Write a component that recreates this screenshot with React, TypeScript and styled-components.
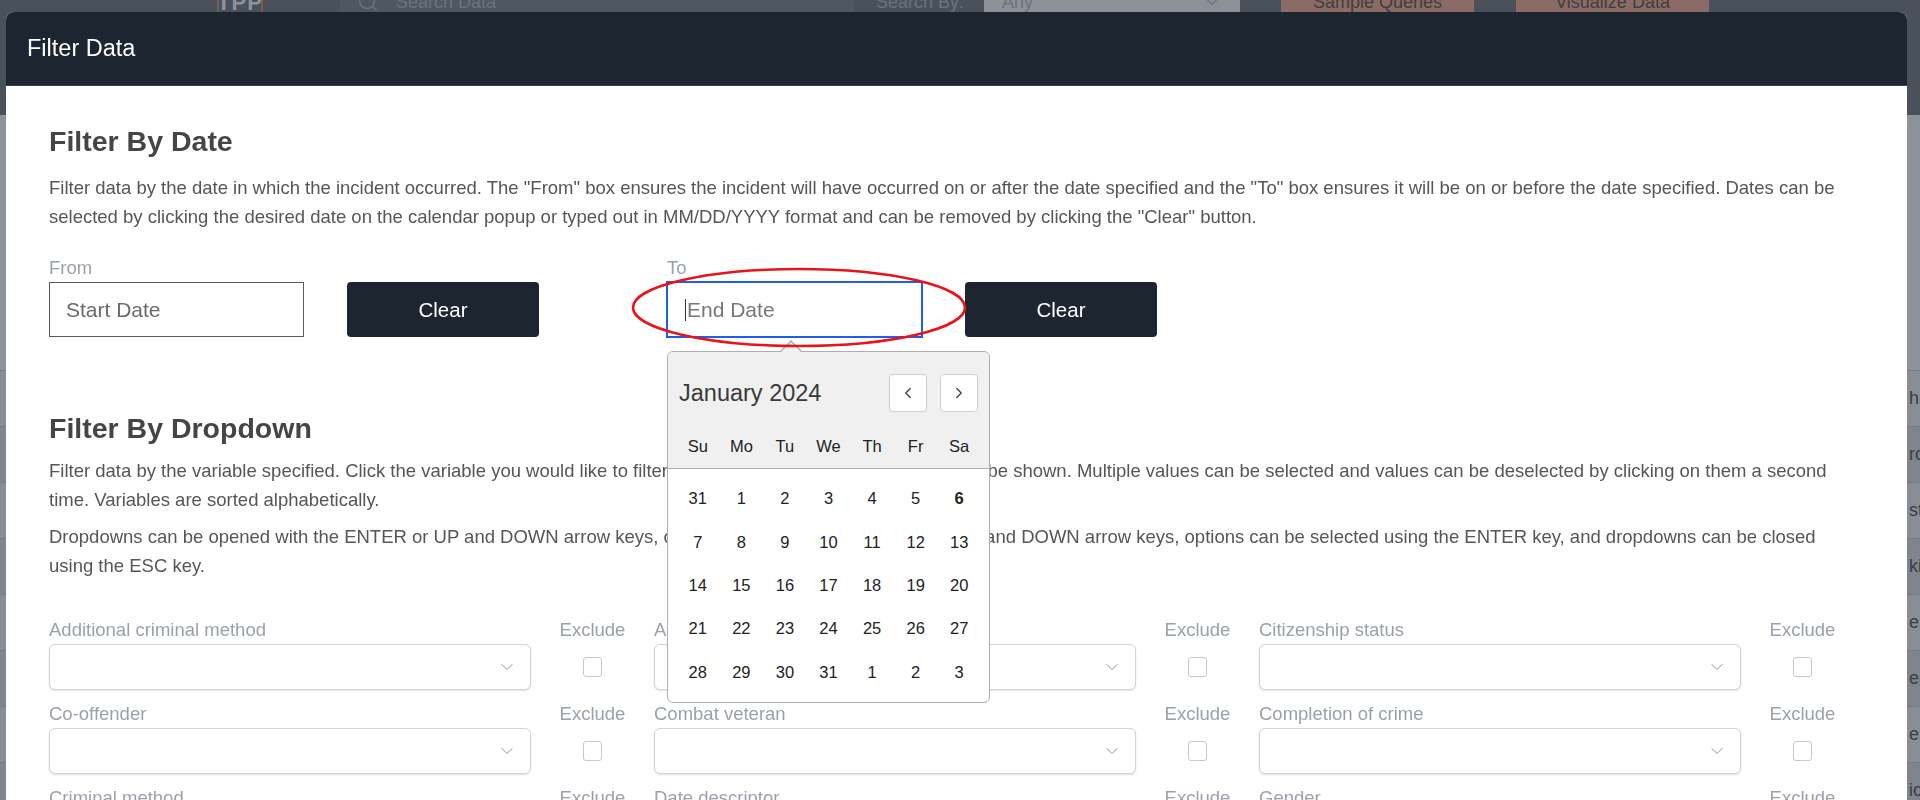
import React from 'react';
import styled, { createGlobalStyle, css } from 'styled-components';
import { ChevronDown, ChevronLeft, ChevronRight, Search } from 'lucide-react';

const GlobalStyle = createGlobalStyle`
  html, body {
    margin: 0;
    padding: 0;
    width: 1920px;
    height: 800px;
    overflow: hidden;
    background: #878c94;
    font-family: "Liberation Sans", Arial, Helvetica, sans-serif;
  }
  * { box-sizing: border-box; }
`;

/* ---------- underlying (dimmed) page ---------- */
const Page = styled.div`
  position: relative;
  width: 1920px;
  height: 800px;
  overflow: hidden;
  background: #878c94;
`;

const NavBar = styled.header`
  height: 115px;
  background: #4b515b;
  display: flex;
  align-items: flex-start;
  padding-left: 217px;
  overflow: hidden;
`;

const Logo = styled.div`
  margin-top: -28px;
  width: 46px;
  height: 42px;
  border-left: 2px solid #7d5a50;
  border-right: 2px solid #7d5a50;
  color: #8e939b;
  font-weight: 700;
  font-size: 22px;
  line-height: 22px;
  display: flex;
  align-items: flex-end;
  justify-content: center;
  letter-spacing: 1px;
`;

const SearchBox = styled.div`
  margin-top: -18px;
  margin-left: 77px;
  width: 514px;
  height: 40px;
  background: #515762;
  display: flex;
  align-items: center;
  gap: 17px;
  padding-left: 17px;
  color: #6c727c;
  font-size: 18px;
`;

const NavText = styled.div<{ $ml: number }>`
  margin-top: -18px;
  margin-left: ${(p) => p.$ml}px;
  height: 40px;
  display: flex;
  align-items: center;
  color: #6c727c;
  font-size: 18px;
`;

const NavSelect = styled.div`
  margin-top: -18px;
  margin-left: 20px;
  width: 256px;
  height: 40px;
  background: #8c9198;
  display: flex;
  align-items: center;
  justify-content: space-between;
  padding: 0 18px 0 18px;
  color: #6c727c;
  font-size: 18px;
`;

const NavButton = styled.div<{ $ml: number }>`
  margin-top: -18px;
  margin-left: ${(p) => p.$ml}px;
  width: 193px;
  height: 40px;
  background: #8c6a66;
  display: flex;
  align-items: center;
  justify-content: center;
  color: #3f3f3f;
  font-size: 18px;
`;

const Band = styled.div`
  height: 255px;
  background: #8e939b;
`;

const TableRow = styled.div<{ $alt: boolean }>`
  height: 56px;
  border-top: 1px solid #767b83;
  background: ${(p) => (p.$alt ? '#80858d' : '#898e96')};
  display: flex;
  align-items: center;
  padding-left: 1909px;
  color: #3b3e44;
  font-size: 18px;
  white-space: nowrap;
`;

/* ---------- modal ---------- */
const Modal = styled.div`
  position: fixed;
  top: 12px;
  left: 6px;
  width: 1901px;
  height: 800px;
  background: #ffffff;
  border-radius: 8px 8px 0 0;
  overflow: hidden;
`;

const ModalHeader = styled.div`
  height: 74px;
  background: #1c2530;
  display: flex;
  align-items: center;
  padding-left: 21px;
  border-bottom: 1px solid #3a434e;
`;

const ModalTitle = styled.h4`
  margin: 0;
  color: #ffffff;
  font-weight: 400;
  font-size: 23.5px;
  line-height: 1.2;
`;

const ModalBody = styled.div`
  padding: 38px 17px 0 43px;
`;

const SectionTitle = styled.h3<{ $mt?: number }>`
  margin: ${(p) => p.$mt ?? 0}px 0 0 0;
  color: #454545;
  font-weight: 700;
  font-size: 28.5px;
  line-height: 34px;
`;

const Text = styled.p<{ $mt?: number; $narrow?: boolean }>`
  margin: ${(p) => p.$mt ?? 0}px 0 0 0;
  color: #565656;
  font-size: 18.5px;
  line-height: 28.5px;
  max-width: ${(p) => (p.$narrow ? '1800px' : 'none')};
`;

const DateRow = styled.div`
  display: flex;
  gap: 128px;
  margin-top: 26px;
`;

const DateGroup = styled.div`
  display: flex;
  flex-direction: column;
  gap: 3px;
`;

const FieldLabel = styled.div`
  color: #9ba1ab;
  font-size: 18.5px;
  line-height: 22px;
  white-space: nowrap;
`;

const DateControls = styled.div`
  display: flex;
  gap: 43px;
  align-items: center;
`;

const InputWrap = styled.div`
  position: relative;
`;

const DateField = styled.div<{ $focused?: boolean }>`
  width: 255px;
  height: 55px;
  border: 1px solid #5c5c5c;
  display: flex;
  align-items: center;
  padding-left: 16px;
  color: #6a6a6a;
  font-size: 21px;
  ${(p) =>
    p.$focused &&
    css`
      border-color: #1f5ee8;
      outline: 1px solid #1f5ee8;
      padding-left: 17px;
      color: #777;
    `}
`;

const Caret = styled.span`
  display: inline-block;
  width: 1px;
  height: 22px;
  background: #333;
  margin-right: 1px;
`;

const ClearButton = styled.button`
  width: 192px;
  height: 55px;
  border: none;
  border-radius: 4px;
  background: #1c2530;
  color: #ffffff;
  font-family: inherit;
  font-size: 20.5px;
  cursor: pointer;
`;

const Annotation = styled.svg`
  position: absolute;
  left: -37px;
  top: -15px;
  width: 338px;
  height: 81px;
  overflow: visible;
  pointer-events: none;
  z-index: 3;
`;

/* calendar */
const Calendar = styled.div`
  position: absolute;
  left: 0;
  top: 69px;
  width: 323px;
  background: #ffffff;
  border: 1px solid #aeaeae;
  border-radius: 6px;
  z-index: 2;

  &::before,
  &::after {
    content: '';
    position: absolute;
    left: 112px;
    width: 0;
    height: 0;
    border-left: 11px solid transparent;
    border-right: 11px solid transparent;
  }
  &::before {
    top: -12px;
    border-bottom: 11px solid #aeaeae;
  }
  &::after {
    top: -10px;
    border-bottom: 11px solid #f0f0f0;
  }
`;

const CalHeader = styled.div`
  background: #f0f0f0;
  border-bottom: 1px solid #aeaeae;
  border-radius: 6px 6px 0 0;
  padding: 22px 11px 0 11px;
`;

const MonthRow = styled.div`
  display: flex;
  align-items: center;
  justify-content: space-between;
  height: 38px;
`;

const MonthName = styled.div`
  color: #3a3a3a;
  font-size: 23.5px;
`;

const NavGroup = styled.div`
  display: flex;
  gap: 13px;
`;

const NavBtn = styled.button`
  width: 38px;
  height: 38px;
  padding: 0;
  border: 1px solid #cfcfcf;
  border-radius: 4px;
  background: #ffffff;
  color: #444;
  display: flex;
  align-items: center;
  justify-content: center;
`;

const WeekGrid = styled.div<{ $head?: boolean }>`
  display: grid;
  grid-template-columns: repeat(7, 1fr);
  padding: ${(p) => (p.$head ? '12px 0 0 0' : '8px 8px 8px 8px')};
  margin: ${(p) => (p.$head ? '0 -3px' : '0')};
`;

const DayCell = styled.div<{ $bold?: boolean; $head?: boolean }>`
  height: ${(p) => (p.$head ? '44px' : '43.4px')};
  display: flex;
  align-items: center;
  justify-content: center;
  color: #222;
  font-size: 16.5px;
  font-weight: ${(p) => (p.$bold ? 700 : 400)};
`;

/* dropdown grid */
const FilterGrid = styled.div`
  display: grid;
  grid-template-columns: repeat(3, 482px 123px);
  row-gap: 13px;
  margin-top: 39px;
`;

const FieldCell = styled.div`
  display: flex;
  flex-direction: column;
  gap: 3px;
`;

const ExcludeCell = styled.div`
  display: flex;
  flex-direction: column;
  align-items: center;
  gap: 3px;
`;

const SelectBox = styled.div`
  height: 46px;
  border: 1px solid #cfd4da;
  border-radius: 6px;
  box-shadow: 0 1px 2px rgba(0, 0, 0, 0.12);
  display: flex;
  align-items: center;
  justify-content: flex-end;
  padding-right: 13px;
  color: #8a9098;
  background: #fff;
`;

const CheckArea = styled.div`
  height: 46px;
  display: flex;
  align-items: center;
  justify-content: center;
`;

const CheckBox = styled.span`
  width: 19px;
  height: 20px;
  border: 1px solid #c4c9cf;
  border-radius: 3px;
  background: #fff;
  margin-left: -1px;
`;

const weeks: number[][] = [
  [31, 1, 2, 3, 4, 5, 6],
  [7, 8, 9, 10, 11, 12, 13],
  [14, 15, 16, 17, 18, 19, 20],
  [21, 22, 23, 24, 25, 26, 27],
  [28, 29, 30, 31, 1, 2, 3],
];

const dayNames = ['Su', 'Mo', 'Tu', 'We', 'Th', 'Fr', 'Sa'];

const fields = [
  'Additional criminal method',
  'Age',
  'Citizenship status',
  'Co-offender',
  'Combat veteran',
  'Completion of crime',
  'Criminal method',
  'Date descriptor',
  'Gender',
  'Ideology',
  'Injury',
  'Location',
];

const rowTexts = ['hi', 'ro', 'st', 'ki,', 'er', 'er', 'er', 'ic'];

export default function App() {
  return (
    <>
      <GlobalStyle />
      <Page>
        <NavBar>
          <Logo>TPP</Logo>
          <SearchBox>
            <Search size={22} strokeWidth={1.6} />
            <span>Search Data</span>
          </SearchBox>
          <NavText $ml={22}>Search By:</NavText>
          <NavSelect>
            <span>Any</span>
            <ChevronDown size={20} strokeWidth={1.4} />
          </NavSelect>
          <NavButton $ml={41}>Sample Queries</NavButton>
          <NavButton $ml={42}>Visualize Data</NavButton>
        </NavBar>
        <Band />
        {rowTexts.map((t, i) => (
          <TableRow key={i} $alt={i % 2 === 1}>
            {t}
          </TableRow>
        ))}
      </Page>

      <Modal>
        <ModalHeader>
          <ModalTitle>Filter Data</ModalTitle>
        </ModalHeader>
        <ModalBody>
          <SectionTitle>Filter By Date</SectionTitle>
          <Text $mt={16}>
            Filter data by the date in which the incident occurred. The "From" box ensures the
            incident will have occurred on or after the date specified and the "To" box ensures it
            will be on or before the date specified. Dates can be selected by clicking the desired
            date on the calendar popup or typed out in MM/DD/YYYY format and can be removed by
            clicking the "Clear" button.
          </Text>
          <DateRow>
            <DateGroup>
              <FieldLabel>From</FieldLabel>
              <DateControls>
                <DateField>Start Date</DateField>
                <ClearButton>Clear</ClearButton>
              </DateControls>
            </DateGroup>
            <DateGroup>
              <FieldLabel>To</FieldLabel>
              <DateControls>
                <InputWrap>
                  <DateField $focused>
                    <Caret />
                    End Date
                  </DateField>
                  <Annotation viewBox="0 0 338 81">
                    <ellipse
                      cx="169"
                      cy="40.5"
                      rx="166"
                      ry="38.5"
                      fill="none"
                      stroke="#e8141b"
                      strokeWidth="2.6"
                    />
                  </Annotation>
                  <Calendar>
                    <CalHeader>
                      <MonthRow>
                        <MonthName>January 2024</MonthName>
                        <NavGroup>
                          <NavBtn aria-label="Previous month">
                            <ChevronLeft size={18} strokeWidth={1.8} />
                          </NavBtn>
                          <NavBtn aria-label="Next month">
                            <ChevronRight size={18} strokeWidth={1.8} />
                          </NavBtn>
                        </NavGroup>
                      </MonthRow>
                      <WeekGrid $head>
                        {dayNames.map((d) => (
                          <DayCell key={d} $head>
                            {d}
                          </DayCell>
                        ))}
                      </WeekGrid>
                    </CalHeader>
                    <WeekGrid>
                      {weeks.flatMap((w, wi) =>
                        w.map((d, di) => (
                          <DayCell key={`${wi}-${di}`} $bold={wi === 0 && d === 6}>
                            {d}
                          </DayCell>
                        ))
                      )}
                    </WeekGrid>
                  </Calendar>
                </InputWrap>
                <ClearButton>Clear</ClearButton>
              </DateControls>
            </DateGroup>
          </DateRow>

          <SectionTitle $mt={74}>Filter By Dropdown</SectionTitle>
          <Text $mt={12} $narrow>
            Filter data by the variable specified. Click the variable you would like to filter by,
            and a list of all possible values will be shown. Multiple values can be selected and
            values can be deselected by clicking on them a second time. Variables are sorted
            alphabetically.
          </Text>
          <Text $mt={9} $narrow>
            Dropdowns can be opened with the ENTER or UP and DOWN arrow keys, options can be
            navigated using the UP and DOWN arrow keys, options can be selected using the ENTER key,
            and dropdowns can be closed using the ESC key.
          </Text>
          <FilterGrid>
            {fields.map((f) => (
              <React.Fragment key={f}>
                <FieldCell>
                  <FieldLabel>{f}</FieldLabel>
                  <SelectBox>
                    <ChevronDown size={20} strokeWidth={1.2} />
                  </SelectBox>
                </FieldCell>
                <ExcludeCell>
                  <FieldLabel>Exclude</FieldLabel>
                  <CheckArea>
                    <CheckBox />
                  </CheckArea>
                </ExcludeCell>
              </React.Fragment>
            ))}
          </FilterGrid>
        </ModalBody>
      </Modal>
    </>
  );
}
